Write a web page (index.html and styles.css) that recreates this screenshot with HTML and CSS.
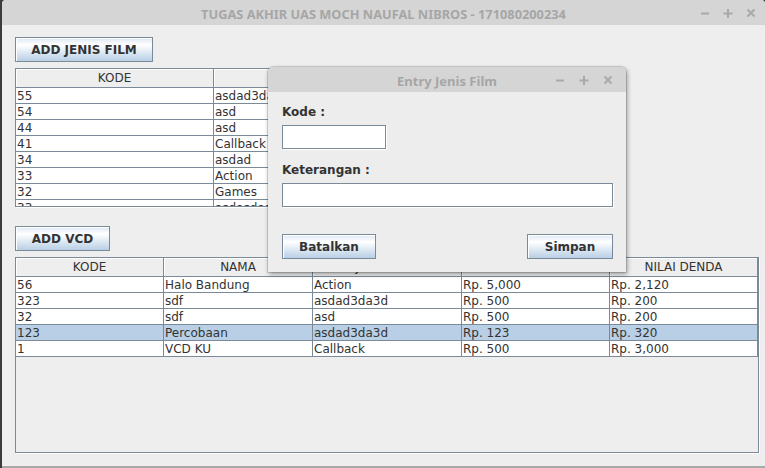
FILE: index.html
```html
<!DOCTYPE html>
<html>
<head>
<meta charset="utf-8">
<link rel="stylesheet" href="styles.css">
</head>
<body>
<div class="desk">
  <div class="win">
    <div class="titlebar">
      <span class="title">TUGAS AKHIR UAS MOCH NAUFAL NIBROS - 171080200234</span>
      <div class="controls">
        <svg width="12" height="12" viewBox="0 0 12 12"><path d="M2 6.5h8" stroke="currentColor" stroke-width="2"/></svg>
        <svg width="12" height="12" viewBox="0 0 12 12"><path d="M1.5 6.5h9M6 2v9" stroke="currentColor" stroke-width="2"/></svg>
        <svg width="12" height="12" viewBox="0 0 12 12"><path d="M2.5 2.5l7 7M9.5 2.5l-7 7" stroke="currentColor" stroke-width="2"/></svg>
      </div>
    </div>
    <div class="content">
      <button class="btn btn-jenis">ADD JENIS FILM</button>
      <div class="pane pane-jenis">
        <div class="row head"><div class="cell">KODE</div><div class="cell">KETERANGAN</div></div>
        <div class="row"><div class="cell">55</div><div class="cell">asdad3da3d</div></div>
        <div class="row"><div class="cell">54</div><div class="cell">asd</div></div>
        <div class="row"><div class="cell">44</div><div class="cell">asd</div></div>
        <div class="row"><div class="cell">41</div><div class="cell">Callback</div></div>
        <div class="row"><div class="cell">34</div><div class="cell">asdad</div></div>
        <div class="row"><div class="cell">33</div><div class="cell">Action</div></div>
        <div class="row"><div class="cell">32</div><div class="cell">Games</div></div>
        <div class="row"><div class="cell">33</div><div class="cell">asdasdasd</div></div>
      </div>
      <button class="btn btn-vcd">ADD VCD</button>
      <div class="pane pane-vcd">
        <div class="row head"><div class="cell">KODE</div><div class="cell">NAMA</div><div class="cell">JENIS FILM</div><div class="cell">HARGA SEWA</div><div class="cell">NILAI DENDA</div></div>
        <div class="row"><div class="cell">56</div><div class="cell">Halo Bandung</div><div class="cell">Action</div><div class="cell">Rp. 5,000</div><div class="cell">Rp. 2,120</div></div>
        <div class="row"><div class="cell">323</div><div class="cell">sdf</div><div class="cell">asdad3da3d</div><div class="cell">Rp. 500</div><div class="cell">Rp. 200</div></div>
        <div class="row"><div class="cell">32</div><div class="cell">sdf</div><div class="cell">asd</div><div class="cell">Rp. 500</div><div class="cell">Rp. 200</div></div>
        <div class="row selected"><div class="cell">123</div><div class="cell">Percobaan</div><div class="cell">asdad3da3d</div><div class="cell">Rp. 123</div><div class="cell">Rp. 320</div></div>
        <div class="row"><div class="cell">1</div><div class="cell">VCD KU</div><div class="cell">Callback</div><div class="cell">Rp. 500</div><div class="cell">Rp. 3,000</div></div>
      </div>
    </div>
  </div>

  <div class="dialog">
    <div class="dtitlebar">
      <span class="dtitle">Entry Jenis Film</span>
      <div class="dcontrols">
        <svg width="12" height="12" viewBox="0 0 12 12"><path d="M2 6.5h8" stroke="currentColor" stroke-width="2"/></svg>
        <svg width="12" height="12" viewBox="0 0 12 12"><path d="M1.5 6.5h9M6 2v9" stroke="currentColor" stroke-width="2"/></svg>
        <svg width="12" height="12" viewBox="0 0 12 12"><path d="M2.5 2.5l7 7M9.5 2.5l-7 7" stroke="currentColor" stroke-width="2"/></svg>
      </div>
    </div>
    <div class="dbody">
      <div class="label label-kode">Kode :</div>
      <div class="field field-kode"></div>
      <div class="label label-ket">Keterangan :</div>
      <div class="field field-ket"></div>
      <div class="actions">
        <button class="btn btn-batal">Batalkan</button>
        <button class="btn btn-simpan">Simpan</button>
      </div>
    </div>
  </div>
</div>
</body>
</html>
```

FILE: styles.css
```css
* { box-sizing: border-box; }
html, body { margin: 0; padding: 0; }
body {
  background: #3b3b3b;
  width: 765px;
  height: 468px;
  overflow: hidden;
}
.desk {
  position: relative;
  display: flex;
  width: 765px;
  height: 468px;
}
.win {
  margin-left: 2px;
  width: 763px;
  height: 468px;
  background: #eeeeee;
  border-bottom: 2px solid #a9a9a9;
  border-radius: 4px 4px 0 0;
  display: flex;
  flex-direction: column;
  overflow: hidden;
}
.titlebar {
  height: 25px;
  flex: none;
  background: #d5d5d5;
  display: grid;
  grid-template-columns: 1fr auto 1fr;
  align-items: center;
}
.title {
  grid-column: 2;
  font-family: "Noto Sans", sans-serif;
  font-weight: bold;
  font-size: 12.8px;
  color: #a6a6a6;
  padding-top: 3px;
}
.controls {
  grid-column: 3;
  justify-self: end;
  display: flex;
  gap: 11px;
  padding-right: 8px;
  color: #a9a9a9;
  padding-top: 1px;
}
.controls svg, .dcontrols svg { display: block; }

.content {
  padding: 12px 0 0 13px;
  display: flex;
  flex-direction: column;
  align-items: flex-start;
  font-family: "DejaVu Sans", sans-serif;
  font-size: 12px;
  color: #333333;
}

.btn {
  font-family: "DejaVu Sans", sans-serif;
  font-weight: bold;
  font-size: 12px;
  color: #333333;
  height: 25px;
  padding: 0;
  border: 1px solid #7a8a99;
  box-shadow: inset 1px 1px 0 #ffffff;
  background: linear-gradient(to bottom, #dde8f3 0%, #ffffff 30%, #b8cfe5 100%);
  border-radius: 0;
}
.btn-jenis { width: 138px; }
.btn-vcd { width: 95px; margin-top: 19px; }

.pane {
  border: 1px solid #7a8a99;
  box-shadow: 1px 1px 0 #ffffff;
  background: #eeeeee;
  overflow: hidden;
}
.pane-jenis { width: 400px; height: 139px; margin-top: 6px; }
.pane-vcd { width: 744px; height: 196px; margin-top: 6px; }

.row { display: grid; }
.pane-jenis .row { grid-template-columns: 198px 198px; }
.pane-vcd .row { grid-template-columns: 148px 149px 149px 148px 148px; }

.cell {
  height: 16px;
  line-height: 16px;
  padding-left: 1px;
  border-right: 1px solid #7a8a99;
  border-bottom: 1px solid #7a8a99;
  background: #ffffff;
  white-space: nowrap;
  overflow: hidden;
}
.row.selected .cell { background: #b8cfe5; }
.row.head .cell {
  height: 19px;
  line-height: 19px;
  padding-left: 0;
  text-align: center;
  background: #eeeeee;
  box-shadow: inset 1px 1px 0 #ffffff;
}

.dialog {
  position: absolute;
  left: 268px;
  top: 67px;
  width: 358px;
  height: 205px;
  background: #ededed;
  border-radius: 5px 5px 0 0;
  box-shadow: 0 0 0 1px rgba(0,0,0,0.12), 1px 2px 5px rgba(0,0,0,0.4);
  display: flex;
  flex-direction: column;
  overflow: hidden;
}
.dtitlebar {
  height: 25px;
  flex: none;
  background: #d5d5d5;
  display: grid;
  grid-template-columns: 1fr auto 1fr;
  align-items: center;
}
.dtitle {
  grid-column: 2;
  font-family: "Noto Sans", sans-serif;
  font-weight: bold;
  font-size: 13px;
  color: #a6a6a6;
  padding-top: 2px;
}
.dcontrols {
  grid-column: 3;
  justify-self: end;
  display: flex;
  gap: 12px;
  padding-right: 12px;
  color: #a9a9a9;
  padding-top: 1px;
}
.dbody {
  padding: 0 13px 0 14px;
  display: flex;
  flex-direction: column;
  align-items: flex-start;
  font-family: "DejaVu Sans", sans-serif;
  font-size: 12px;
  color: #333333;
}
.label {
  font-weight: bold;
  line-height: 15px;
  height: 15px;
}
.label-kode { margin-top: 13px; }
.label-ket { margin-top: 14px; }
.field {
  height: 24px;
  margin-top: 5px;
  background: #ffffff;
  border: 1px solid #7a8a99;
  box-shadow: 1px 1px 0 #ffffff;
}
.field-kode { width: 104px; }
.field-ket { width: 331px; }
.actions {
  margin-top: 27px;
  width: 331px;
  display: flex;
  justify-content: space-between;
}
.btn-batal { width: 94px; }
.btn-simpan { width: 86px; }
```
